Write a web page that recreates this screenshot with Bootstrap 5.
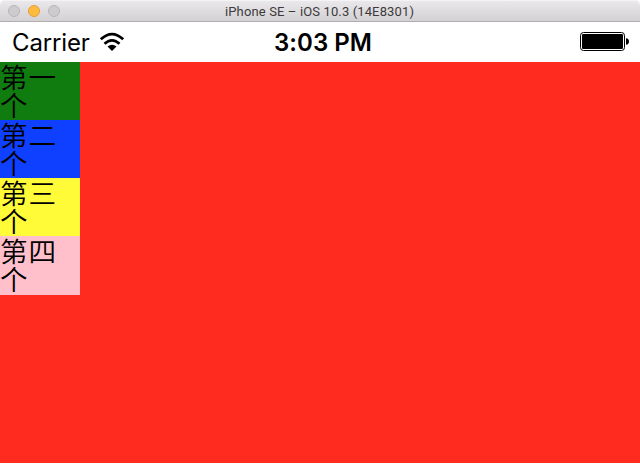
<!DOCTYPE html>
<html lang="zh-CN">
<head>
<meta charset="utf-8">
<meta name="viewport" content="width=device-width, initial-scale=1">
<title>iPhone SE – iOS 10.3 (14E8301)</title>
<link href="https://cdn.jsdelivr.net/npm/bootstrap@5.3.0/dist/css/bootstrap.min.css" rel="stylesheet">
<style>
body{font-family:Inter,"Liberation Sans",sans-serif;color:#000;background:#fff}
.simulator{width:640px;height:463px;overflow:hidden}
.titlebar{height:22px;background:linear-gradient(#ebe9eb,#d3d1d3);border-bottom:1px solid #b0aeb0;border-radius:5px 5px 0 0;box-shadow:inset 0 1px #f5f4f5}
.dots{gap:8px;padding-left:8px;flex:0 0 225px}
.dot{width:12px;height:12px;border-radius:50%;background:#cdcbcd;border:1px solid #b7b5b7}
.dot-min{background:#fdbc40;border-color:#e2a03a}
.window-title{font-family:Roboto,sans-serif;font-size:13px;letter-spacing:.13px;line-height:21px;padding-top:1px;color:#3c3a3c;white-space:nowrap}
.statusbar{height:40px;background:#fff}
.side{flex:1 1 0}
.carrier{font-size:24px;letter-spacing:-.15px;line-height:38px;padding-left:12px}
.carrier span,.clock{padding-top:2px}
.carrier svg{margin-left:9px}
.clock{font-size:24px;line-height:38px;font-weight:600;letter-spacing:.05px;padding-left:2px;white-space:nowrap}
.screen{background:#ff2b1f}
.label-cell{width:80px;height:58.15px;font-family:"Noto Sans CJK SC",sans-serif;font-size:27.6px;letter-spacing:1px;line-height:28px;font-weight:350}
.c-green{background:#107c10}.c-blue{background:#0f3fff}.c-yellow{background:#fffb38}.c-pink{background:#ffc0cb}
</style>
<script src="https://cdn.jsdelivr.net/npm/bootstrap@5.3.0/dist/js/bootstrap.bundle.min.js"></script>
</head>
<body>
<div class="simulator d-flex flex-column">
  <header class="titlebar d-flex align-items-center flex-shrink-0">
    <div class="dots d-flex"><i class="dot"></i><i class="dot dot-min"></i><i class="dot"></i></div>
    <div class="window-title">iPhone SE – iOS 10.3 (14E8301)</div>
  </header>
  <div class="statusbar d-flex align-items-center flex-shrink-0">
    <div class="side d-flex align-items-center carrier">
      <span>Carrier</span>
      <svg width="26" height="20" viewBox="0 0 26 20" fill="none" stroke="#000" stroke-width="2.8">
        <path d="M1.8 7.3Q13-3 24.2 7.3M5.5 11.8Q13 5 20.5 11.8"/>
        <path d="M8.5 14.5Q13 10.9 17.5 14.5L13 19Z" fill="#000" stroke="none"/>
      </svg>
    </div>
    <div class="clock">3:03 PM</div>
    <div class="side d-flex justify-content-end pe-2">
      <svg width="52" height="20" viewBox="0 0 52 20">
        <rect x=".5" y=".5" width="44" height="18" rx="3" fill="none" stroke="#000"/>
        <rect x="2" y="2" width="41" height="15" rx="1.2"/>
        <path d="M46 6.2Q49 6.5 49 9.5T46 12.8Z"/>
      </svg>
    </div>
  </div>
  <main class="screen flex-grow-1">
    <div class="label-cell c-green">第一个</div>
    <div class="label-cell c-blue">第二个</div>
    <div class="label-cell c-yellow">第三个</div>
    <div class="label-cell c-pink">第四个</div>
  </main>
</div>
</body>
</html>
